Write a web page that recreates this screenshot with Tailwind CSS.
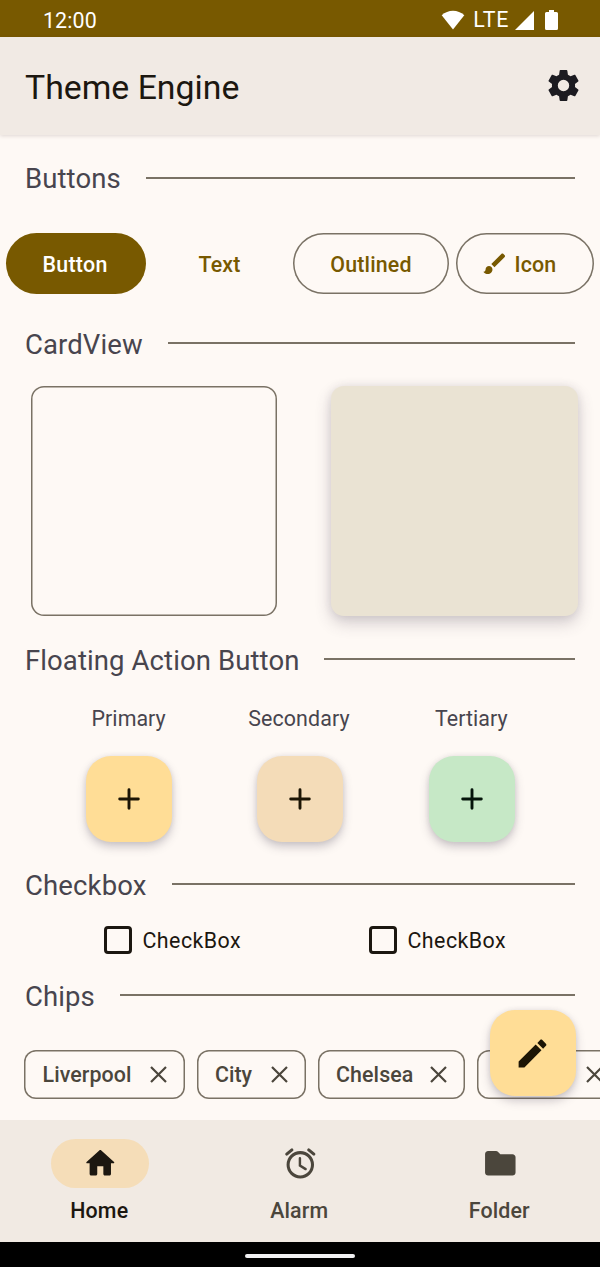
<!DOCTYPE html>
<html lang="en">
<head>
<meta charset="utf-8">
<title>Theme Engine</title>
<script src="https://cdn.jsdelivr.net/npm/@tailwindcss/browser@4"></script>
</head>
<body class="bg-black font-[Roboto,sans-serif]">
<div class="w-[600px] h-[1267px] flex flex-col overflow-hidden bg-[#fef9f5] text-[21.4px] leading-[26px] whitespace-nowrap">

  <!-- Status bar -->
  <div class="h-[37px] shrink-0 bg-[#785900] text-white flex items-center justify-between pl-[43px] pr-[42px] pt-[3px]">
    <span class="tracking-[0.1px] pt-[2px]">12:00</span>
    <div class="flex items-center">
      <svg class="w-[24px] h-[20px] mr-[8px]" viewBox="0 0 24 20" fill="currentColor"><path d="M12 19.5 L0.7 5.2 C7 -0.9 17 -0.9 23.3 5.2 Z"/></svg>
      <span class="mr-[6px] tracking-[0.7px]">LTE</span>
      <svg class="w-[19px] h-[19px] mr-[11px]" viewBox="0 0 19 19" fill="currentColor"><path d="M0 19H19V0Z"/></svg>
      <svg class="w-[13px] h-[20px]" viewBox="0 0 13 20" fill="currentColor"><path d="M4 0H9V2H11.5Q13 2 13 3.5V18.5Q13 20 11.5 20H1.5Q0 20 0 18.5V3.500Q0 2 1.500 2H4Z"/></svg>
    </div>
  </div>

  <!-- App bar -->
  <header class="h-[98px] shrink-0 bg-[#f1eae4] shadow-[0_1px_4px_rgba(60,40,40,0.16)] flex items-center justify-between pl-[25px] pr-[18px] pt-[1px] text-[#1c1710]">
    <h1 class="text-[33.800px] leading-[40px] pt-[2px]">Theme Engine</h1>
    <svg class="w-[37px] h-[37px] text-[#1c1b21] -mt-[2px]" viewBox="0 0 24 24" fill="currentColor"><path d="M19.43 12.98c.04-.32.07-.64.07-.98s-.03-.66-.07-.98l2.110-1.650c.19-.15.24-.42.12-.64l-2-3.460c-.12-.22-.39-.3-.61-.22l-2.490 1c-.52-.4-1.080-.73-1.690-.98l-.38-2.650C14.460 2.180 14.250 2 14 2h-4c-.25 0-.46.18-.49.42l-.38 2.650c-.61.25-1.170.59-1.690.98l-2.490-1c-.23-.09-.49 0-.61.22l-2 3.460c-.13.22-.07.49.12.64l2.110 1.650c-.04.32-.07.65-.07.98s.03.66.07.98l-2.110 1.650c-.19.15-.24.42-.12.64l2 3.460c.12.22.39.3.61.22l2.490-1c.52.4 1.080.73 1.690.98l.38 2.650c.03.24.24.42.49.42h4c.25 0 .46-.18.49-.42l.38-2.650c.61-.25 1.170-.59 1.690-.98l2.490 1c.23.09.49 0 .61-.22l2-3.460c.12-.22.07-.49-.12-.64l-2.110-1.650zM12 15.700a3.700 3.700 0 1 1 0-7.400 3.700 3.700 0 0 1 0 7.400z"/></svg>
  </header>

  <main class="h-[985px] shrink-0 flex flex-col relative pt-[28px]">
    <div class="h-[32px] flex items-center gap-[25px] px-[25px] text-[27.5px] text-[#48454e]">
      <h2 class="tracking-[0.1px]">Buttons</h2><div class="flex-1 h-[2px] -mt-[2px] bg-[#7a7265]"></div>
    </div>

    <div class="mt-[38px] h-[61px] flex pl-[6px] font-medium tracking-[0.15px] text-[#785900]">
      <button class="w-[140px] h-[61px] rounded-full bg-[#785900] text-white pt-[2px] pr-[2px] tracking-[0.3px]">Button</button>
      <button class="w-[111px] h-[61px] ml-[18px] pt-[2px]">Text</button>
      <button class="w-[156px] h-[61px] ml-[18px] rounded-full shadow-[inset_0_0_0_1.5px_#7a7265] pt-[2px]">Outlined</button>
      <button class="w-[138px] h-[61px] ml-[7px] rounded-full shadow-[inset_0_0_0_1.5px_#7a7265] flex items-center pl-[25px] gap-[6px]">
        <svg class="w-[27.500px] h-[27.500px]" viewBox="0 0 24 24" fill="currentColor"><path d="M7 14c-1.660 0-3 1.340-3 3 0 1.310-1.160 2-2 2 .92 1.220 2.490 2 4 2 2.210 0 4-1.790 4-4 0-1.660-1.340-3-3-3zm13.710-9.370l-1.340-1.340c-.39-.39-1.020-.39-1.410 0L9 12.250 11.750 15l8.960-8.960c.39-.39.39-1.020 0-1.410z"/></svg>
        <span class="pt-[2px]">Icon</span>
      </button>
    </div>

    <div class="mt-[34px] h-[32px] flex items-center gap-[25px] px-[25px] text-[27.5px] text-[#48454e]">
      <h2 class="tracking-[0.1px] pt-[2px]">CardView</h2><div class="flex-1 h-[2px] -mt-[2px] bg-[#7a7265]"></div>
    </div>

    <div class="mt-[26px] h-[230px] flex pl-[31px] gap-[54px]">
      <div class="w-[246px] h-[230px] rounded-[13px] shadow-[inset_0_0_0_1.5px_#7a7265]"></div>
      <div class="w-[247px] h-[230px] rounded-[13px] bg-[#eae3d3] shadow-[0_7px_16px_rgba(70,60,80,0.24),0_0_9px_rgba(70,60,80,0.10)]"></div>
    </div>

    <div class="mt-[28px] h-[32px] flex items-center gap-[25px] px-[25px] text-[27.5px] text-[#48454e]">
      <h2 class="tracking-[0.1px] pt-[2px]">Floating Action Button</h2><div class="flex-1 h-[2px] -mt-[2px] bg-[#7a7265]"></div>
    </div>

    <div class="mt-[30px] flex px-[43px] text-[#48454e]">
      <div class="flex-1 flex flex-col items-center gap-[23.5px]">
        <span class="tracking-[0.05px]">Primary</span>
        <button class="w-[86px] h-[86px] rounded-[25px] bg-[#ffdd96] shadow-[0_5px_10px_rgba(70,60,80,0.26),0_0_5px_rgba(70,60,80,0.10)] flex items-center justify-center"><svg class="w-[22px] h-[22px]" viewBox="0 0 22 22" fill="none" stroke="#1c1505" stroke-width="2.9" stroke-linecap="round"><path d="M11 1.700V20.300M1.700 11H20.300"/></svg></button>
      </div>
      <div class="flex-1 flex flex-col items-center gap-[23.5px]">
        <span class="tracking-[0.1px] pr-[2px]">Secondary</span>
        <button class="w-[86px] h-[86px] rounded-[25px] bg-[#f4dcb8] shadow-[0_5px_10px_rgba(70,60,80,0.26),0_0_5px_rgba(70,60,80,0.10)] flex items-center justify-center"><svg class="w-[22px] h-[22px]" viewBox="0 0 22 22" fill="none" stroke="#1c1505" stroke-width="2.9" stroke-linecap="round"><path d="M11 1.700V20.300M1.700 11H20.300"/></svg></button>
      </div>
      <div class="flex-1 flex flex-col items-center gap-[23.5px]">
        <span class="tracking-[0.05px]">Tertiary</span>
        <button class="w-[86px] h-[86px] rounded-[25px] bg-[#c6e8c6] shadow-[0_5px_10px_rgba(70,60,80,0.26),0_0_5px_rgba(70,60,80,0.10)] flex items-center justify-center ml-px"><svg class="w-[22px] h-[22px]" viewBox="0 0 22 22" fill="none" stroke="#04140a" stroke-width="2.9" stroke-linecap="round"><path d="M11 1.700V20.300M1.700 11H20.300"/></svg></button>
      </div>
    </div>

    <div class="mt-[28.5px] h-[32px] flex items-center gap-[25px] px-[25px] text-[27.5px] text-[#48454e]">
      <h2 class="tracking-[0.15px]">Checkbox</h2><div class="flex-1 h-[2px] -mt-[4px] bg-[#7a7265]"></div>
    </div>

    <div class="mt-[24px] h-[28px] flex pl-[104px] text-[#1c1710]">
      <label class="w-[265px] flex items-center gap-[10.5px]"><span class="w-[28px] h-[28px] rounded-[4px] border-3 border-[#1c1710]"></span><span class="tracking-[0.45px] pt-px">CheckBox</span></label>
      <label class="flex items-center gap-[10.5px]"><span class="w-[28px] h-[28px] rounded-[4px] border-3 border-[#1c1710]"></span><span class="tracking-[0.45px] pt-px">CheckBox</span></label>
    </div>

    <div class="mt-[27px] h-[32px] flex items-center gap-[25px] px-[25px] text-[27.5px] text-[#48454e]">
      <h2 class="tracking-[0.1px]">Chips</h2><div class="flex-1 h-[2px] -mt-[4px] bg-[#7a7265]"></div>
    </div>

    <div class="mt-[37px] h-[49px] flex gap-[12px] pl-[24px] font-medium text-[#4b463c] overflow-hidden">
      <div class="w-[160.5px] shrink-0 h-[49px] rounded-[12px] shadow-[inset_0_0_0_1.5px_#7a7265] flex items-center justify-between pl-[18.500px] pr-[18px]"><span class="tracking-[0.1px]">Liverpool</span><svg class="w-[17px] h-[17px]" viewBox="0 0 17 17" fill="none" stroke="currentColor" stroke-width="2.200"><path d="M1 1L16 16M16 1L1 16"/></svg></div>
      <div class="w-[109px] shrink-0 h-[49px] rounded-[12px] shadow-[inset_0_0_0_1.5px_#7a7265] flex items-center justify-between pl-[18.500px] pr-[18px]"><span>City</span><svg class="w-[17px] h-[17px]" viewBox="0 0 17 17" fill="none" stroke="currentColor" stroke-width="2.200"><path d="M1 1L16 16M16 1L1 16"/></svg></div>
      <div class="w-[147px] shrink-0 h-[49px] rounded-[12px] shadow-[inset_0_0_0_1.5px_#7a7265] flex items-center justify-between pl-[18.500px] pr-[18px]"><span class="tracking-[0.1px]">Chelsea</span><svg class="w-[17px] h-[17px]" viewBox="0 0 17 17" fill="none" stroke="currentColor" stroke-width="2.200"><path d="M1 1L16 16M16 1L1 16"/></svg></div>
      <div class="w-[143px] shrink-0 h-[49px] rounded-[12px] shadow-[inset_0_0_0_1.5px_#7a7265] flex items-center justify-end pr-[17px]"><svg class="w-[17px] h-[17px]" viewBox="0 0 17 17" fill="none" stroke="currentColor" stroke-width="2.200"><path d="M1 1L16 16M16 1L1 16"/></svg></div>
    </div>

    <!-- Floating edit button over the content -->
    <button class="absolute right-[24px] bottom-[24px] w-[86px] h-[86px] rounded-[25px] bg-[#ffdd96] text-[#1c1505] shadow-[0_5px_10px_rgba(70,60,80,0.26),0_0_5px_rgba(70,60,80,0.10)] flex items-center justify-center pr-px"><svg class="w-[37px] h-[37px]" viewBox="0 0 24 24" fill="currentColor"><path d="M3 17.250V21h3.750L17.810 9.940l-3.750-3.750L3 17.250zM20.710 7.040c.39-.39.39-1.020 0-1.410l-2.340-2.340c-.39-.39-1.020-.39-1.410 0l-1.830 1.830 3.750 3.750 1.830-1.830z"/></svg></button>
  </main>

  <!-- Bottom navigation -->
  <nav class="h-[122px] shrink-0 bg-[#f1eae3] flex pt-[19px] font-medium text-[#4b463c]">
    <a class="flex-1 flex flex-col items-center gap-[10px] text-[#1c1710]">
      <span class="w-[98px] h-[49px] rounded-full bg-[#f5ddb8] flex items-center justify-center"><svg class="w-[36.600px] h-[36.600px]" viewBox="0 0 24 24" fill="currentColor"><path d="M10 19v-5h4v5c0 .55.45 1 1 1h3c.55 0 1-.45 1-1v-7h1.700c.46 0 .68-.57.33-.87L12.670 3.600c-.38-.34-.96-.34-1.340 0l-8.360 7.530c-.34.3-.13.87.33.87H5v7c0 .55.45 1 1 1h3c.55 0 1-.45 1-1z"/></svg></span>
      <span class="pr-[1.5px] tracking-[0.15px]">Home</span>
    </a>
    <a class="flex-1 flex flex-col items-center gap-[10px]">
      <span class="w-[98px] h-[49px] flex items-center justify-center"><svg class="w-[36.600px] h-[36.600px]" viewBox="0 0 24 24" fill="none" stroke="currentColor" stroke-width="2"><circle cx="12" cy="13" r="8"/><path d="M11.750 8.700V13.500L15.500 15.800" stroke-width="1.600" stroke-linecap="round"/><path d="M17.500 3.200L20.900 6M6.500 3.200L3.100 6" stroke-linecap="round"/></svg></span>
      <span class="pr-[1.5px] tracking-[0.15px]">Alarm</span>
    </a>
    <a class="flex-1 flex flex-col items-center gap-[10px]">
      <span class="w-[98px] h-[49px] flex items-center justify-center"><svg class="w-[36.600px] h-[36.600px]" viewBox="0 0 24 24" fill="currentColor"><path d="M10.590 4.590C10.210 4.210 9.700 4 9.170 4H4c-1.100 0-1.990.9-1.990 2L2 18c0 1.100.9 2 2 2h16c1.100 0 2-.9 2-2V8c0-1.100-.9-2-2-2h-8l-1.410-1.410z"/></svg></span>
      <span class="pr-[1.5px] tracking-[0.15px]">Folder</span>
    </a>
  </nav>

  <div class="h-[25px] shrink-0 bg-black flex items-center justify-center pt-[2px]"><div class="w-[110px] h-[4px] rounded-full bg-[#f1f1f3]"></div></div>
</div>
</body>
</html>
